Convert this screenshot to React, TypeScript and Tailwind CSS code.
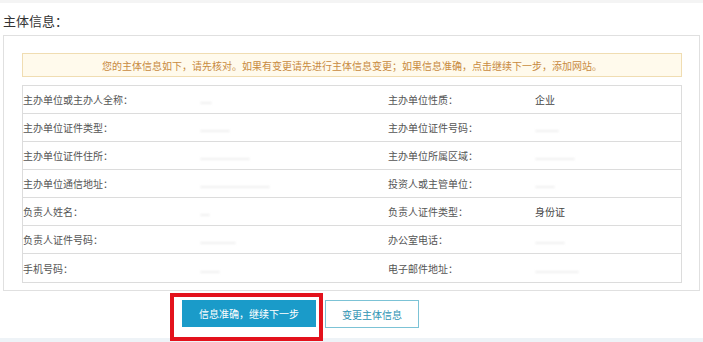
const font = { fontFamily: '"Noto Sans CJK SC", "Noto Sans", sans-serif' };

type Cell = { label: string; value?: string; blur?: number };

const rows: [Cell, Cell][] = [
  [{ label: "主办单位或主办人全称：", blur: 12 }, { label: "主办单位性质：", value: "企业" }],
  [{ label: "主办单位证件类型：", blur: 30 }, { label: "主办单位证件号码：", blur: 24 }],
  [{ label: "主办单位证件住所：", blur: 50 }, { label: "主办单位所属区域：", blur: 40 }],
  [{ label: "主办单位通信地址：", blur: 70 }, { label: "投资人或主管单位：", blur: 20 }],
  [{ label: "负责人姓名：", blur: 10 }, { label: "负责人证件类型：", value: "身份证" }],
  [{ label: "负责人证件号码：", blur: 36 }, { label: "办公室电话：", blur: 30 }],
  [{ label: "手机号码：", blur: 20 }, { label: "电子邮件地址：", blur: 44 }],
];

// redacted values in the screenshot are blurred out — keep them as faint smudges
function Value({ cell }: { cell: Cell }) {
  if (cell.value) return <span className="text-[#444]">{cell.value}</span>;
  if (!cell.blur) return null;
  return (
    <span
      className="inline-block h-[2px] rounded-full bg-[#f0f0f0] blur-[1px]"
      style={{ width: cell.blur }}
    />
  );
}

export default function App() {
  return (
    <div className="relative h-[342px] w-[703px] overflow-hidden bg-white" style={font}>
      <div className="h-[3px] bg-[#f4f4f4]" />
      <div className="px-[3px] pt-[10px]">
        <h2 className="text-[13px] leading-[16px] text-[#333]">主体信息：</h2>

        <div className="mt-[6px] border border-[#e0e0e0] pb-[7px] pl-[18px] pr-[17px] pt-[17px]">
          <div className="flex h-[24px] items-center justify-center border border-[#f0ddb2] bg-[#fffaec] text-[10px] text-[#c88a3f]">
            您的主体信息如下，请先核对。如果有变更请先进行主体信息变更；如果信息准确，点击继续下一步，添加网站。
          </div>

          <div className="mt-[8px] border border-[#dcdcdc] text-[10px] text-[#555]">
            {rows.map(([l, r], i) => (
              <div
                key={i}
                className={
                  "grid h-[28px] grid-cols-[177px_188px_147px_1fr] items-center" +
                  (i < rows.length - 1 ? " border-b border-[#dcdcdc]" : "")
                }
              >
                <span>{l.label}</span>
                <span>
                  <Value cell={l} />
                </span>
                <span>{r.label}</span>
                <span>
                  <Value cell={r} />
                </span>
              </div>
            ))}
          </div>
        </div>

        <div className="flex gap-[9px] pl-[179px] pt-[9px]">
          <button className="h-[27px] w-[134px] bg-[#1a9bc9] text-[10px] text-white">
            信息准确，继续下一步
          </button>
          <button className="h-[28px] w-[94px] border border-[#7cc3d6] bg-white text-[10px] text-[#2f93b3]">
            变更主体信息
          </button>
        </div>
      </div>

      <div className="absolute bottom-0 left-0 h-[4px] w-full bg-[#eef3f7]" />

      {/* red highlight box drawn over the primary button */}
      <div className="absolute left-[170px] top-[293px] h-[48px] w-[153px] border-4 border-[#e3121c]" />
    </div>
  );
}
